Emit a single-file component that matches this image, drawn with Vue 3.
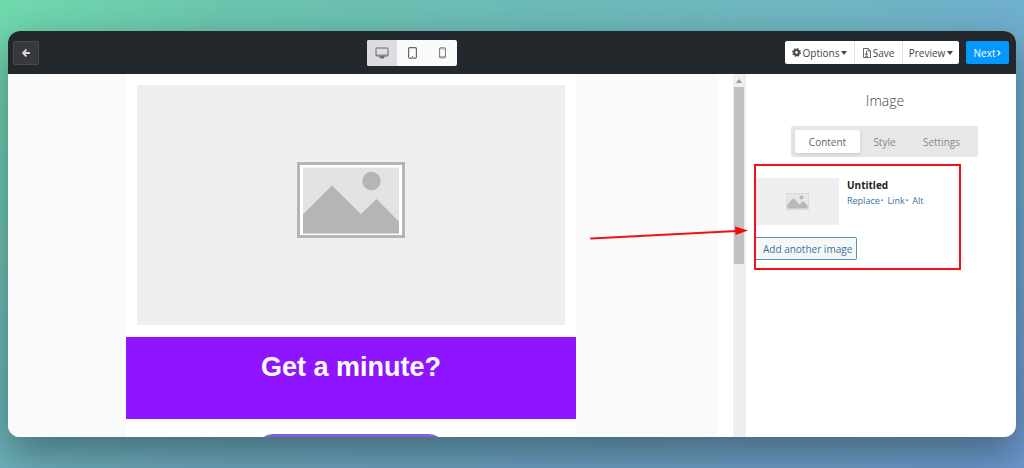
<script setup>
import { ref } from 'vue'

const device = ref('desktop')
const tab = ref('Content')
const tabs = ['Content', 'Style', 'Settings']
</script>

<template>
  <div class="page">
    <div class="window">
      <header class="topbar">
        <button class="back" aria-label="Back">
          <svg width="8" height="8" viewBox="0 0 8 8"><path d="M4.400 .5 1 4l3.400 3.500M1 4h7" fill="none" stroke="currentColor" stroke-width="1.800" /></svg>
        </button>

        <div class="devices">
          <button :class="{ on: device === 'desktop' }" aria-label="Desktop" @click="device = 'desktop'">
            <svg width="14" height="12" viewBox="0 0 14 12"><rect x="1" y="1" width="12" height="8" rx=".8" fill="none" stroke="currentColor" /><path d="M1 8h12M5 9.500h4v1.500H5z" fill="currentColor" stroke="currentColor" stroke-width=".7" /></svg>
          </button>
          <button :class="{ on: device === 'tablet' }" aria-label="Tablet" @click="device = 'tablet'">
            <svg width="9" height="12" viewBox="0 0 9 12"><rect x=".6" y=".6" width="7.800" height="10.600" rx="1.200" fill="none" stroke="currentColor" stroke-width="1.200" /><path d="M4 9.500h1" stroke="currentColor" stroke-width="1" /></svg>
          </button>
          <button :class="{ on: device === 'phone' }" aria-label="Phone" @click="device = 'phone'">
            <svg width="7" height="12" viewBox="0 0 7 12"><rect x=".6" y=".8" width="5.800" height="10" rx=".6" fill="none" stroke="currentColor" stroke-width=".9" /><path d="M1 2h5M1 9.500h5" stroke="currentColor" stroke-width=".5" /></svg>
          </button>
        </div>

        <div class="actions">
          <div class="group">
            <button class="options">
              <svg width="9" height="9" viewBox="0 0 9 9"><circle cx="4.500" cy="4.500" r="2.400" fill="none" stroke="currentColor" stroke-width="2" /><circle cx="4.500" cy="4.500" r="3.800" fill="none" stroke="currentColor" stroke-width="1.300" stroke-dasharray="1.500 1.485" /></svg>
              Options
              <svg width="6" height="4" viewBox="0 0 6 4"><path d="M0 0h6L3 4z" fill="currentColor" /></svg>
            </button>
            <button class="save">
              <svg width="8" height="10" viewBox="0 0 8 10"><path d="M.5.5h4.700L7.500 3v6.500h-7zM5 .5V3h2.500M3.500 3v4M2 5.500l1.500 1.800L5 5.500M2 8.300h3" fill="none" stroke="currentColor" stroke-width=".8" /></svg>
              Save
            </button>
            <button class="view">
              Preview
              <svg width="6" height="4" viewBox="0 0 6 4"><path d="M0 0h6L3 4z" fill="currentColor" /></svg>
            </button>
          </div>
          <button class="next">
            Next
            <svg width="4" height="6" viewBox="0 0 4 6"><path d="M.6.5 3 3 .6 5.500" fill="none" stroke="currentColor" stroke-width="1.200" /></svg>
          </button>
        </div>
      </header>

      <div class="body">
        <main class="stage">
          <article class="mail">
            <div class="hero">
              <svg width="108" height="76" viewBox="0 0 108 76"><path d="M0 0h108v76H0z" fill="#b5b5b5" /><path d="M3 3h102v70H3z" fill="#fff" /><path d="M6 5.500h96v66H6z" fill="#e3e3e3" /><circle cx="74.500" cy="19" r="9.200" fill="#b5b5b5" /><path d="M6 52.500 35 23.500 64 52 79.500 37 102 59.500v12H6z" fill="#b5b5b5" /></svg>
            </div>
            <div class="banner"><h1>Get a minute?</h1></div>
            <div class="pill"></div>
          </article>
        </main>

        <div class="scroll">
          <svg width="6" height="4" viewBox="0 0 6 4"><path d="M0 4h6L3 0z" fill="#999" /></svg>
          <div class="thumb"></div>
        </div>

        <aside class="panel">
          <h2>Image</h2>
          <div class="tabs">
            <button v-for="t in tabs" :key="t" :class="{ on: tab === t }" @click="tab = t">{{ t }}</button>
          </div>
          <section class="item">
            <div class="row">
              <div class="preview">
                <svg width="23" height="17" viewBox="0 0 23 17"><path d="M.5.500h22v16H.5z" fill="#e6e6e6" stroke="#dadada" /><circle cx="15.500" cy="4.500" r="2" fill="#b8b8b8" /><path d="M1.500 11.500 7.500 5l6 6.500L17 8l4.500 4.500v3h-20z" fill="#b8b8b8" /></svg>
              </div>
              <div class="meta">
                <strong>Untitled</strong>
                <div class="links"><a href="#">Replace</a><i>•</i><a href="#">Link</a><i>•</i><a href="#">Alt</a></div>
              </div>
            </div>
            <button class="add">Add another image</button>
          </section>
        </aside>
      </div>

      <svg class="arrow" width="160" height="20" viewBox="0 0 160 20"><path d="M2 13.500 148 6" stroke="#ee1313" stroke-width="2" stroke-linecap="round" /><path d="M146 1.500 159 5.500 146.500 10z" fill="#f30b0b" /></svg>
    </div>
  </div>
</template>

<style>
body {
  margin: 0;
}
</style>

<style scoped>
.page {
  box-sizing: border-box;
  min-height: 100vh;
  padding: 31px 8px;
  display: flex;
  overflow: hidden;
  font-family: "Open Sans", "Noto Sans", sans-serif;
  font-size: 10px;
  line-height: 14px;
  color: #444;
  background:
    linear-gradient(to bottom, rgba(104, 110, 205, 0) 0%, rgba(104, 110, 205, 0.4) 100%),
    linear-gradient(to right, #70dbae 0%, #6cc6ae 22%, #6cbbb9 55%, #70b6c2 82%, #70b0d0 100%);
}
.window {
  position: relative;
  flex: 1;
  min-width: 0;
  display: flex;
  flex-direction: column;
  border-radius: 12px;
  background: #fff;
  box-shadow: 0 16px 40px rgba(35, 60, 60, 0.55);
}
button {
  font: inherit;
  color: inherit;
  border: 0;
  padding: 0;
  margin: 0;
  background: none;
  display: flex;
  align-items: center;
  justify-content: center;
}
.topbar {
  height: 43px;
  padding: 0 7px 0 5px;
  display: flex;
  align-items: center;
  background: #23282d;
  border-radius: 12px 12px 0 0;
}
.back {
  width: 26px;
  height: 24px;
  box-sizing: border-box;
  border: 1px solid #48494d;
  border-radius: 2px;
  background: #38393d;
  color: #d8d8d8;
}
.devices {
  display: flex;
  margin: 0 328px 0 auto;
  border-radius: 2px;
  overflow: hidden;
  background: #f9fafa;
  color: #666;
}
.devices button {
  width: 30px;
  height: 26px;
}
.devices button.on {
  background: #dddce0;
}
.actions,
.group {
  display: flex;
}
.actions {
  gap: 7px;
}
.group {
  border-radius: 2px;
  overflow: hidden;
  background: #fff;
}
.group button {
  box-sizing: border-box;
  height: 23px;
  gap: 2px;
}
.group button + button {
  border-left: 1px solid #e3e3e3;
}
.group .options {
  width: 69px;
}
.group .save {
  width: 48px;
}
.group .view {
  width: 57px;
}
.next {
  width: 43px;
  height: 23px;
  gap: 2px;
  border-radius: 2px;
  background: #0498ff;
  color: #fff;
}
.body {
  flex: 1;
  display: flex;
  min-height: 0;
}
.stage {
  flex: 1;
  height: 363px;
  display: flex;
  justify-content: center;
  overflow: hidden;
  background: #fafafa;
  border-right: 16px solid #fff;
  border-radius: 0 0 0 12px;
}
.mail {
  width: 450px;
  margin-right: 23px;
  background: #fff;
}
.hero {
  height: 240px;
  margin: 11px 11px 12px;
  display: flex;
  align-items: center;
  justify-content: center;
  background: #efefef;
}
.hero svg {
  margin-bottom: 10px;
}
.banner {
  height: 82px;
  background: #8f14ff;
}
.banner h1 {
  margin: 0;
  padding-top: 14px;
  text-align: center;
  font: bold 27px/32px "Liberation Sans", sans-serif;
  color: #fff;
}
.pill {
  width: 188px;
  height: 32px;
  margin: 15px auto 0;
  border-radius: 16px;
  background: #8060d8;
}
.scroll {
  width: 12px;
  display: flex;
  flex-direction: column;
  align-items: center;
  background: #efefef;
}
.scroll svg {
  margin: 5px 0 4px;
}
.thumb {
  width: 10px;
  height: 177px;
  background: #c1c1c1;
}
.panel {
  width: 270px;
  border-left: 1px solid #eee;
}
.panel h2 {
  margin: 17px 0 0;
  padding-left: 8px;
  text-align: center;
  font-weight: 300;
  font-size: 14px;
  line-height: 20px;
  color: #444;
}
.tabs {
  width: 187px;
  height: 31px;
  box-sizing: border-box;
  margin: 15px auto 0 45px;
  padding: 4px;
  display: flex;
  border-radius: 2px;
  background: #e7e7e7;
  color: #888;
}
.tabs button {
  flex: 0 0 65px;
  border-radius: 2px;
}
.tabs button:nth-child(2) {
  flex-basis: 49px;
}
.tabs button.on {
  background: #fff;
  color: #666;
  box-shadow: 0 2px 4px rgba(0, 0, 0, 0.1);
}
.item {
  box-sizing: border-box;
  width: 207px;
  height: 106px;
  margin: 7px 0 0 8px;
  padding-top: 12px;
  border: 2px solid #f90d17;
}
.row {
  display: flex;
  gap: 8px;
}
.preview {
  width: 83px;
  height: 47px;
  display: flex;
  align-items: center;
  justify-content: center;
  background: #efefef;
}
.meta strong {
  display: block;
  color: #222;
}
.links {
  display: flex;
  font-size: 9px;
  margin-top: 2px;
}
.links i {
  margin: 0 4px 0 1px;
  font-style: normal;
  font-size: 7px;
  color: #3674a0;
}
.links a,
.add {
  color: #3674a0;
  text-decoration: none;
}
.add {
  height: 23px;
  margin-top: 12px;
  padding: 0 4px 0 7px;
  border: 1px solid #5a91aa;
  border-left: 0;
  border-radius: 0 2px 2px 0;
  background: #f6f8f8;
}
.arrow {
  position: absolute;
  right: 267px;
  top: 194px;
}
</style>
